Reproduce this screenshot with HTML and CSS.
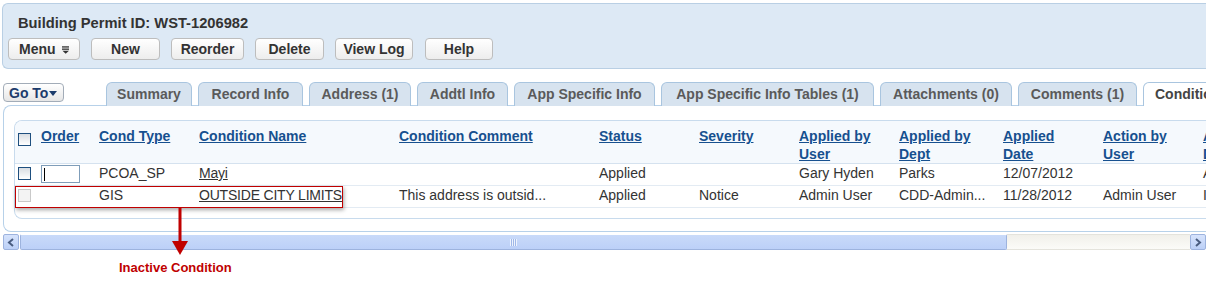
FILE: index.html
```html
<!DOCTYPE html>
<html>
<head>
<link rel="stylesheet" href="styles.css">
</head>
<body>
<div class="page">
	<div class="record-header">
		<div class="record-title">Building Permit ID: WST-1206982</div>
		<div class="toolbar">
			<button class="btn btn-menu">Menu <svg class="menu-icon" width="8" height="8" viewBox="0 0 8 8"><rect x="0" y="0" width="8" height="1.4" fill="#333"/><rect x="0" y="2.4" width="8" height="1.4" fill="#333"/><polygon points="0.5,4.8 7.5,4.8 4,8" fill="#333"/></svg></button>
			<button class="btn btn-new">New</button>
			<button class="btn btn-reorder">Reorder</button>
			<button class="btn btn-delete">Delete</button>
			<button class="btn btn-log">View Log</button>
			<button class="btn btn-help">Help</button>
		</div>
	</div>

	<div class="tabbar">
		<button class="goto">Go To<svg class="goto-caret" width="8" height="5" viewBox="0 0 8 5"><polygon points="0,0 8,0 4,5" fill="#1c3c6c"/></svg></button>
		<div class="tabs">
			<div class="tab tab-summary">Summary</div>
			<div class="tab tab-record">Record Info</div>
			<div class="tab tab-address">Address (1)</div>
			<div class="tab tab-addtl">Addtl Info</div>
			<div class="tab tab-asi">App Specific Info</div>
			<div class="tab tab-asit">App Specific Info Tables (1)</div>
			<div class="tab tab-attach">Attachments (0)</div>
			<div class="tab tab-comments">Comments (1)</div>
			<div class="tab tab-active">Conditions (2)</div>
		</div>
	</div>

	<div class="tab-panel">
		<div class="grid-box">
			<table class="grid">
				<colgroup>
					<col class="c-check"><col class="c-order"><col class="c-type"><col class="c-name"><col class="c-comment">
					<col class="c-status"><col class="c-sev"><col class="c-user"><col class="c-dept"><col class="c-date">
					<col class="c-action"><col class="c-last">
				</colgroup>
				<thead>
					<tr>
						<th class="check-cell"><span class="cb"></span></th>
						<th><a href="#">Order</a></th>
						<th><a href="#">Cond Type</a></th>
						<th><a href="#">Condition Name</a></th>
						<th><a href="#">Condition Comment</a></th>
						<th><a href="#">Status</a></th>
						<th><a href="#">Severity</a></th>
						<th><a href="#">Applied by User</a></th>
						<th><a href="#">Applied by Dept</a></th>
						<th><a href="#">Applied Date</a></th>
						<th><a href="#">Action by User</a></th>
						<th><a href="#">Action by Dept</a></th>
					</tr>
				</thead>
				<tbody>
					<tr>
						<td class="check-cell"><span class="cb"></span></td>
						<td class="order-cell"><div class="order-input"><span class="caret"></span></div></td>
						<td>PCOA_SP</td>
						<td><a class="cond-link" href="#">Mayi</a></td>
						<td></td>
						<td>Applied</td>
						<td></td>
						<td>Gary Hyden</td>
						<td>Parks</td>
						<td>12/07/2012</td>
						<td></td>
						<td>Admin</td>
					</tr>
					<tr>
						<td class="check-cell"><span class="cb cb-off"></span></td>
						<td></td>
						<td>GIS</td>
						<td><a class="cond-link" href="#">OUTSIDE CITY LIMITS</a></td>
						<td>This address is outsid...</td>
						<td>Applied</td>
						<td>Notice</td>
						<td>Admin User</td>
						<td>CDD-Admin...</td>
						<td>11/28/2012</td>
						<td>Admin User</td>
						<td>IT</td>
					</tr>
				</tbody>
			</table>
		</div>
	</div>

	<div class="hscroll">
		<span class="hs-btn"><svg width="8" height="9" viewBox="0 0 8 9"><polyline points="6,1 2,4.5 6,8" fill="none" stroke="#4a5d80" stroke-width="2"/></svg></span>
		<span class="hs-thumb"><span class="hs-grip"></span></span>
		<span class="hs-track"></span>
		<span class="hs-btn"><svg width="8" height="9" viewBox="0 0 8 9"><polyline points="2,1 6,4.5 2,8" fill="none" stroke="#4a5d80" stroke-width="2"/></svg></span>
	</div>

	<!-- annotation laid over the screenshot -->
	<div class="callout-box"></div>
	<svg class="callout-arrow" width="18" height="48" viewBox="0 0 18 48"><rect x="7.5" y="0" width="3" height="34" fill="#c00000"/><polygon points="1,33 17,33 9,47" fill="#c00000"/></svg>
	<div class="callout-label">Inactive Condition</div>
</div>
</body>
</html>
```

FILE: styles.css
```css
html, body {
    margin: 0;
    overflow: hidden;
    background: #fff;
}
body {
    font-family: "Liberation Sans", Arial, sans-serif;
    font-size: 14px;
    color: #333;
}
.page {
    position: relative;
    width: 1206px;
    height: 297px;
    overflow: hidden;
}

/* record header */
.record-header {
    margin: 3px 0 0 2px;
    height: 66px;
    box-sizing: border-box;
    background: #dde9f5;
    border: 1px solid #b9cfe4;
    border-right: none;
    border-radius: 6px 0 0 6px;
    padding: 10px 0 0 5px;
}
.record-title {
    font-size: 14.7px;
    font-weight: bold;
    line-height: 18px;
    padding-left: 10px;
    color: #333;
}
.toolbar {
    display: flex;
    gap: 11px;
    margin-top: 6px;
}
.btn {
    height: 22px;
    box-sizing: border-box;
    padding: 0 10px;
    border: 1px solid #bdbdbd;
    border-radius: 4px;
    background: linear-gradient(#ffffff, #ededed);
    font-family: inherit;
    font-size: 14px;
    font-weight: bold;
    color: #333;
    display: flex;
    align-items: center;
    justify-content: center;
    flex: none;
}
.btn-menu { width: 72px; }
.btn-new { width: 69px; }
.btn-reorder { width: 73px; }
.btn-delete { width: 69px; }
.btn-log { width: 78px; padding: 0; }
.btn-help { width: 68px; margin-left: 1px; }
.menu-icon {
    margin-left: 6px;
    margin-top: 1px;
}

/* tabs */
.tabbar {
    display: flex;
    align-items: flex-start;
    margin-top: 13px;
    height: 23px;
    position: relative;
    z-index: 1;
}
.goto {
    flex: none;
    margin: 1px 0 0 3px;
    width: 61px;
    height: 19px;
    box-sizing: border-box;
    border: 1px solid #a2acb8;
    border-radius: 4px;
    background: linear-gradient(#ffffff, #e6e6e6);
    font-family: inherit;
    font-size: 14px;
    font-weight: bold;
    color: #1c3c6c;
    padding: 0 0 0 5px;
    display: flex;
    align-items: center;
    white-space: nowrap;
}
.goto-caret {
    margin-left: 1px;
    margin-top: 1px;
}
.tabs {
    display: flex;
    gap: 6px;
    margin-left: 42px;
}
.tab {
    height: 24px;
    box-sizing: border-box;
    border: 1px solid #a9c5df;
    border-bottom: none;
    border-radius: 6px 6px 0 0;
    background: #d7e3ef;
    color: #5a5a5a;
    font-weight: bold;
    font-size: 14px;
    line-height: 22px;
    text-align: center;
    white-space: nowrap;
    flex: none;
}
.tab-summary { width: 86px; }
.tab-record { width: 105px; }
.tab-address { width: 102px; }
.tab-addtl { width: 91px; }
.tab-asi { width: 141px; }
.tab-asit { width: 213px; }
.tab-attach { width: 132px; }
.tab-comments { width: 119px; }
.tab-active {
    background: #fff;
    color: #444;
    text-align: left;
    padding-left: 11px;
    width: 140px;
}

/* tab body */
.tab-panel {
    margin-left: 3px;
    border: 1px solid #b7d1e9;
    border-right: none;
    border-radius: 8px 0 0 8px;
    padding: 14px 0 12px 10px;
}
.grid-box {
    border: 1px solid #c8dbed;
    border-right: none;
    border-radius: 8px 0 0 8px;
    overflow: hidden;
    background: #fff;
    padding-bottom: 10px;
}
.grid {
    border-collapse: collapse;
    table-layout: fixed;
    width: 1290px;
    font-size: 14px;
}
.c-check { width: 26px; }
.c-order { width: 58px; }
.c-type { width: 100px; }
.c-name { width: 200px; }
.c-comment { width: 200px; }
.c-status { width: 100px; }
.c-sev { width: 100px; }
.c-user { width: 100px; }
.c-dept { width: 104px; }
.c-date { width: 100px; }
.c-action { width: 100px; }
.c-last { width: 102px; }

.grid thead tr {
    height: 42px;
}
.grid th {
    background: #f5f9fd;
    text-align: left;
    vertical-align: top;
    padding: 6px 18px 0 0;
    line-height: 18px;
    font-weight: bold;
    border-bottom: 1px solid #d5e2ef;
}
.grid th a {
    color: #17508f;
    text-decoration: underline;
}
.grid td {
    padding: 0 0 3px;
    line-height: 18px;
    vertical-align: top;
    white-space: nowrap;
    border-bottom: 1px solid #e3ebf3;
}
.grid th.check-cell { padding: 12px 0 0 3px; }
.grid td.check-cell { padding: 3px 0 0 3px; }
.grid td.order-cell { padding: 1px 0 0; }
.cb {
    display: block;
    width: 13px;
    height: 13px;
    box-sizing: border-box;
    border: 1px solid #1e4f7f;
    background: linear-gradient(#d9dde2, #ffffff);
}
.cb-off {
    border-color: #c9c9c9;
    background: #f3f3f3;
}
.order-input {
    width: 39px;
    height: 18px;
    box-sizing: border-box;
    border: 1px solid #7f9db9;
    background: #fff;
    padding: 2px 0 0 2px;
}
.caret {
    display: block;
    width: 1px;
    height: 13px;
    background: #000;
}
.cond-link {
    color: #333;
    text-decoration: underline;
    letter-spacing: -0.2px;
}

/* horizontal scroller */
.hscroll {
    display: flex;
    margin: 2px 0 0 3px;
    height: 16px;
}
.hs-btn {
    flex: none;
    width: 16px;
    height: 16px;
    box-sizing: border-box;
    border: 1px solid #9db3de;
    border-radius: 2px;
    background: linear-gradient(#d6e3fc, #bcd0f7);
    display: flex;
    align-items: center;
    justify-content: center;
}
.hs-thumb {
    flex: none;
    margin-left: 1px;
    width: 987px;
    box-sizing: border-box;
    border: 1px solid #9db3de;
    border-top-color: #fff;
    border-radius: 2px;
    background: linear-gradient(#c9daf9, #bcd0f8);
    display: flex;
    align-items: center;
    justify-content: center;
}
.hs-grip {
    width: 7px;
    height: 7px;
    background: repeating-linear-gradient(90deg, #eef3fd 0 1px, #9fb8e8 1px 2px);
}
.hs-track {
    flex: none;
    width: 183px;
    border-top: 1px solid #e4e3dc;
    border-bottom: 1px solid #e4e3dc;
    box-sizing: border-box;
    background: linear-gradient(#f1f0ea, #fbfbf8);
}

/* annotation */
.callout-box {
    position: absolute;
    left: 15px;
    top: 186px;
    width: 328px;
    height: 22px;
    box-sizing: border-box;
    border: 1px solid #c00000;
    box-shadow: 1px 2px 4px rgba(0, 0, 0, 0.35);
}
.callout-arrow {
    position: absolute;
    left: 171px;
    top: 208px;
}
.callout-label {
    position: absolute;
    left: 119px;
    top: 260px;
    font-size: 13px;
    font-weight: bold;
    color: #c00000;
}
```
